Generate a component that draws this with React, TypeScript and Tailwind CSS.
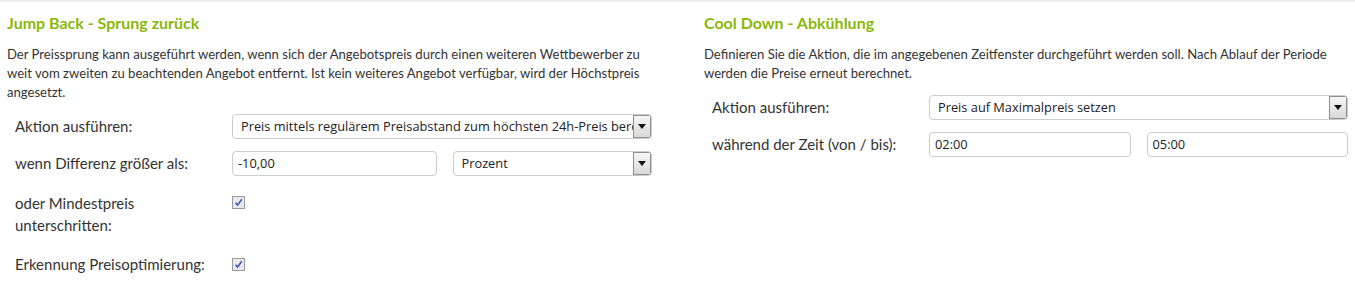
import React from 'react';

const labelFont = { fontFamily: 'Lato, "Noto Sans", sans-serif' };

function SelectBox({ value }: { value: string }) {
  return (
    <div className="flex h-[25px] min-w-0 flex-1 items-center overflow-hidden rounded-[4px] border border-[#cccccc] bg-white">
      <span className="min-w-0 flex-1 overflow-hidden whitespace-nowrap pl-[8px] pt-[1px] text-[12.8px] text-[#222222] [font-family:'Open_Sans',sans-serif]">
        {value}
      </span>
      <div className="flex h-full w-[18px] shrink-0 items-center justify-center border border-[#8f8f8f] bg-gradient-to-b from-[#f6f6f6] to-[#d9d9d9]">
        <svg width="8" height="5" viewBox="0 0 8 5">
          <path d="M0 0 H8 L4 5 Z" fill="#111" />
        </svg>
      </div>
    </div>
  );
}

function TextBox({ value }: { value: string }) {
  return (
    <div className="flex h-[25px] min-w-0 flex-1 items-center rounded-[4px] border border-[#cccccc] bg-white pl-[5px] pt-[1px] text-[12.8px] text-[#222222] [font-family:'Open_Sans',sans-serif]">
      {value}
    </div>
  );
}

function Check() {
  return (
    <div className="flex h-[13px] w-[13px] items-center justify-center border border-[#9a9a9a] bg-[#e8e8ee]">
      <svg width="9" height="9" viewBox="0 0 9 9">
        <path d="M1.5 4.8 L3.6 7 L7.8 1.2" stroke="#3d5aa8" strokeWidth="1.6" fill="none" />
      </svg>
    </div>
  );
}

function Row({ label, children, className = '' }: { label: React.ReactNode; children: React.ReactNode; className?: string }) {
  return (
    <div className={`flex items-center ${className}`}>
      <div className="w-[225px] shrink-0 pl-[8px] text-[15px] text-[#333333]">{label}</div>
      <div className="flex min-w-0 flex-1 gap-[16px]">{children}</div>
    </div>
  );
}

export default function App() {
  return (
    <div className="h-[296px] w-[1355px] border-t-2 border-[#eeeeee] bg-white pt-[11px]" style={labelFont}>
      <div className="grid grid-cols-[645px_644px] gap-[52px] pl-[7px]">
        {/* Jump Back */}
        <div>
          <h2 className="h-[20px] text-[16px] font-bold leading-[20px] text-[#8ab70a]">Jump Back - Sprung zurück</h2>
          <p className="mt-[12px] text-[13.1px] leading-[19px] text-[#333333]">
            Der Preissprung kann ausgeführt werden, wenn sich der Angebotspreis durch einen weiteren Wettbewerber zu weit vom zweiten zu beachtenden Angebot entfernt. Ist kein weiteres Angebot verfügbar, wird der Höchstpreis angesetzt.
          </p>
          <Row label="Aktion ausführen:" className="mt-[12px] h-[25px]">
            <SelectBox value="Preis mittels regulärem Preisabstand zum höchsten 24h-Preis berechnen" />
          </Row>
          <Row label="wenn Differenz größer als:" className="mt-[12px] h-[25px]">
            <TextBox value="-10,00" />
            <SelectBox value="Prozent" />
          </Row>
          <div className="mt-[16px] flex items-start">
            <div className="w-[225px] shrink-0 pl-[8px] text-[15px] leading-[22px] text-[#333333]">
              oder Mindestpreis
              <br />
              unterschritten:
            </div>
            <div className="pt-[4px]">
              <Check />
            </div>
          </div>
          <div className="mt-[17px] flex items-center">
            <div className="w-[225px] shrink-0 pl-[8px] text-[15px] leading-[22px] text-[#333333]">Erkennung Preisoptimierung:</div>
            <Check />
          </div>
        </div>

        {/* Cool Down */}
        <div>
          <h2 className="h-[20px] text-[16px] font-bold leading-[20px] text-[#8ab70a]">Cool Down - Abkühlung</h2>
          <p className="mt-[12px] text-[13.1px] leading-[19px] text-[#333333]">
            Definieren Sie die Aktion, die im angegebenen Zeitfenster durchgeführt werden soll. Nach Ablauf der Periode werden die Preise erneut berechnet.
          </p>
          <Row label="Aktion ausführen:" className="mt-[12px] h-[25px]">
            <SelectBox value="Preis auf Maximalpreis setzen" />
          </Row>
          <Row label="während der Zeit (von / bis):" className="mt-[12px] h-[25px]">
            <TextBox value="02:00" />
            <TextBox value="05:00" />
          </Row>
        </div>
      </div>
    </div>
  );
}
